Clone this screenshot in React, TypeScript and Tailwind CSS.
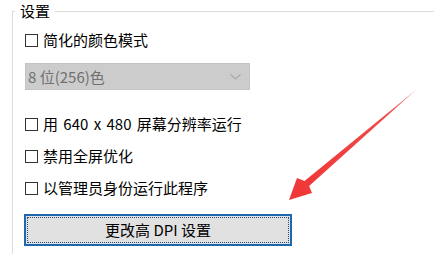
import React from "react";

const font = { fontFamily: '"Noto Sans CJK SC", "Noto Sans", sans-serif' };

function Check({ label, wide }: { label: string; wide?: boolean }) {
  return (
    <div className="flex h-[20px] items-center">
      <span className="box-border h-[13px] w-[13px] border border-[#333333] bg-white" />
      <span
        className={
          wide
            ? "ml-[5px] text-[15px] leading-[20px] text-black [word-spacing:2px]"
            : "ml-[5px] text-[15px] leading-[20px] text-black"
        }
      >
        {label}
      </span>
    </div>
  );
}

export default function App() {
  return (
    <div className="relative h-[254px] w-[434px] overflow-hidden bg-white" style={font}>
      <div className="pl-[12px] pt-[1px]">
        <fieldset className="m-0 box-border h-[260px] border-0 border-l border-t border-solid border-[#dcdcdc] pl-[2px] pr-0">
          <legend className="px-[5px] text-[15px] leading-[20px] text-black">设置</legend>
          <div className="flex flex-col pl-[10px]">
            <div className="mt-[9px]">
              <Check label="简化的颜色模式" />
            </div>
            <div className="mt-[13px] box-border flex h-[27px] w-[225px] items-center justify-between border border-[#c4c4c4] bg-[#cccccc] pl-[2px] pr-[8px]">
              <span className="text-[15px] leading-[20px] text-[#707070]">8 位(256)色</span>
              <svg width="11" height="6" viewBox="0 0 11 6">
                <path d="M0.5 0.5 L5.5 5 L10.5 0.5" fill="none" stroke="#a8a8a8" strokeWidth="1.2" />
              </svg>
            </div>
            <div className="mt-[24px] flex flex-col gap-[12px]">
              <Check label="用 640 x 480 屏幕分辨率运行" wide />
              <Check label="禁用全屏优化" />
              <Check label="以管理员身份运行此程序" />
            </div>
            <div className="-ml-[1px] mt-[16px] box-border h-[32px] w-[268px] border-2 border-[#1f68ad] bg-[#e1e1e1] p-[1px]">
              <div className="flex h-full w-full items-center justify-center border border-dotted border-[#2a4f78] text-[15px] leading-[20px] text-black">
                更改高 DPI 设置
              </div>
            </div>
          </div>
        </fieldset>
      </div>
      <svg className="pointer-events-none absolute left-0 top-0" width="434" height="254" viewBox="0 0 434 254">
        <defs>
          <linearGradient id="g" x1="417" y1="89" x2="300" y2="190" gradientUnits="userSpaceOnUse">
            <stop offset="0" stopColor="#f4a0a0" />
            <stop offset="0.25" stopColor="#ee4a4a" />
            <stop offset="1" stopColor="#f03838" />
          </linearGradient>
        </defs>
        <polygon
          points="417,89 309.1,186.1 312,193 289,200 297,178 304.5,180.9"
          fill="url(#g)"
        />
      </svg>
    </div>
  );
}
